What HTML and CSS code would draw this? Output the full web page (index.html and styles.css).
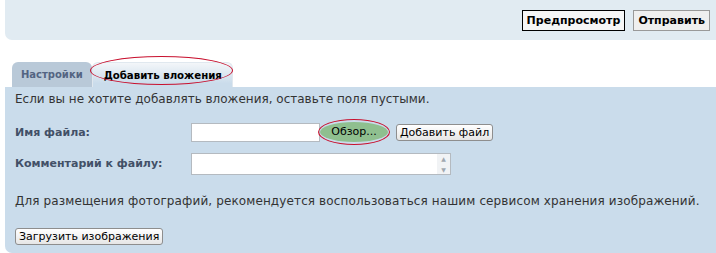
FILE: index.html
```html
<!DOCTYPE html>
<html lang="ru">
<head>
    <meta charset="UTF-8">
    <title>Вложения</title>
    <link rel="stylesheet" href="styles.css">
</head>
<body>
    <div class="top-panel">
        <button class="btn btn-main">Предпросмотр</button>
        <button class="btn btn-send">Отправить</button>
    </div>

    <ul class="tabs">
        <li class="tab">Настройки</li>
        <li class="tab tab-active">Добавить вложения<span class="mark mark-tab"></span></li>
    </ul>

    <div class="panel">
        <p class="intro">Если вы не хотите добавлять вложения, оставьте поля пустыми.</p>

        <div class="row">
            <label class="label">Имя файла:</label>
            <div class="file-field">
                <span class="file-input"></span>
                <span class="browse">Обзор...<span class="mark mark-browse"></span></span>
            </div>
            <button class="btn-small">Добавить файл</button>
        </div>

        <div class="row">
            <label class="label">Комментарий к файлу:</label>
            <div class="comment">
                <span class="scroll"><span class="arr">&#9650;</span><span class="arr">&#9660;</span></span>
            </div>
        </div>

        <p class="note">Для размещения фотографий, рекомендуется воспользоваться нашим сервисом хранения изображений.</p>
        <button class="btn-small btn-upload">Загрузить изображения</button>
    </div>
</body>
</html>
```

FILE: styles.css
```css
body {
    margin: 0;
    font-family: "DejaVu Sans", Verdana, sans-serif;
    background: #fff;
    color: #333;
}
.top-panel {
    margin-left: 5px;
    height: 40px;
    background: #e1ebf2;
    border-radius: 0 0 0 7px;
    display: flex;
    justify-content: flex-end;
    align-items: center;
    gap: 8px;
    padding-right: 6px;
}
.btn {
    font-family: "DejaVu Sans", Verdana, sans-serif;
    font-weight: bold;
    font-size: 11px;
    height: 21px;
    padding: 0 4px;
    background: #efefef;
    color: #000;
    border: 1px solid #999;
}
.btn-main {
    border-color: #000;
    background: #f6f6f6;
}
.tabs {
    list-style: none;
    margin: 22px 0 0 12px;
    padding: 0;
    display: flex;
    height: 25px;
}
.tab {
    position: relative;
    padding: 0 9px;
    font-size: 10px;
    font-weight: bold;
    line-height: 25px;
    color: #536482;
    background: #b9c9d8;
    border-radius: 6px 6px 0 0;
}
.tab-active {
    margin-left: 0;
    padding: 0 10px 0 11px;
    font-size: 10.2px;
    color: #000;
    background: linear-gradient(#f3f6f9, #cadceb 85%);
    border: 1px solid #e0e8ef;
    border-bottom: none;
}
.mark {
    position: absolute;
    border: 1px solid #c8102e;
    border-radius: 50%;
}
.mark-tab {
    left: -3px;
    right: -1px;
    top: -7px;
    bottom: 2px;
}
.panel {
    margin-left: 5px;
    height: 156px;
    padding: 5px 10px 5px 10px;
    background: #cadceb;
    border-radius: 0 0 0 7px;
}
.intro {
    margin: 0 0 15px;
    font-size: 12px;
    color: #333;
}
.row {
    display: flex;
    align-items: center;
    height: 22px;
    margin-bottom: 9px;
}
.label {
    width: 176px;
    font-size: 11px;
    font-weight: bold;
    color: #425067;
}
.file-field {
    display: flex;
    align-items: center;
}
.file-input {
    width: 127px;
    height: 17px;
    background: #fff;
    border: 1px solid #b4bac0;
}
.browse {
    position: relative;
    width: 68px;
    height: 20px;
    line-height: 20px;
    text-align: center;
    font-size: 11px;
    color: #000;
    background: #8fbf8f;
    border-radius: 50%;
}
.mark-browse {
    inset: -3px -2px -3px -2px;
}
.btn-small {
    font-family: "DejaVu Sans", Verdana, sans-serif;
    font-size: 11px;
    height: 17px;
    padding: 0 3px;
    margin-left: 8px;
    background: linear-gradient(#ffffff, #e6e6e6);
    color: #000;
    border: 1px solid #8e8e8e;
    border-radius: 3px;
}
.comment {
    position: relative;
    width: 258px;
    height: 20px;
    background: #fff;
    border: 1px solid #b4bac0;
    margin-top: 2px;
}
.scroll {
    position: absolute;
    right: 0;
    top: 0;
    bottom: 0;
    width: 13px;
    display: flex;
    flex-direction: column;
    justify-content: space-between;
    background: #f1f3f5;
}
.arr {
    font-size: 6px;
    line-height: 9px;
    color: #a0a8b0;
    text-align: center;
}
.note {
    margin: 20px 0 17px;
    font-size: 12px;
    letter-spacing: 0.12px;
    color: #333;
}
.btn-upload {
    margin-left: 0;
}
```
